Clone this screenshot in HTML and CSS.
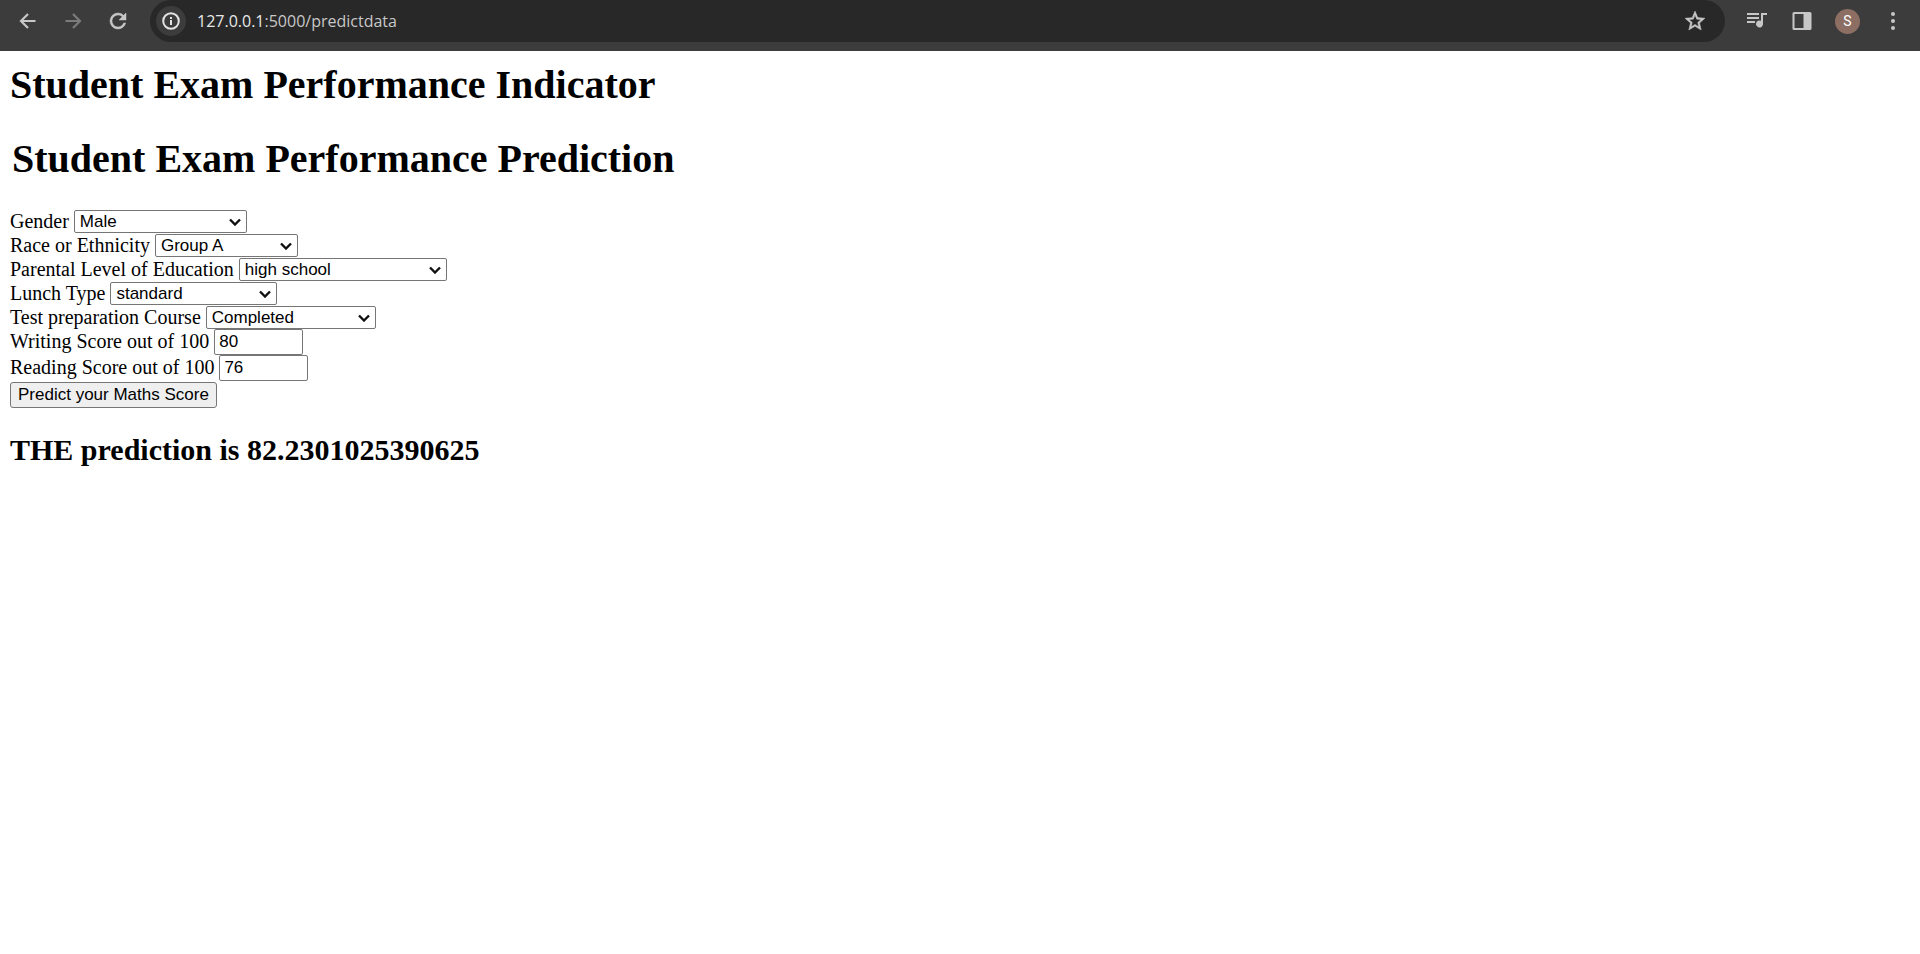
FILE: index.html
```html
<!DOCTYPE html>
<html lang="en">
<head>
<meta charset="utf-8">
<title>Student Exam Performance</title>
<link rel="stylesheet" href="styles.css">
</head>
<body>
<header class="toolbar">
  <nav class="nav-buttons" aria-label="Navigation">
    <button class="icon-button" type="button" aria-label="Back">
      <svg class="icon" viewBox="0 0 24 24"><path d="M19.500 12H5.500M12 5l-7 7 7 7" fill="none" stroke="currentColor" stroke-width="2.200"/></svg>
    </button>
    <button class="icon-button icon-button-dim" type="button" aria-label="Forward">
      <svg class="icon" viewBox="0 0 24 24"><path d="M4.500 12H18.500M12 5l7 7-7 7" fill="none" stroke="currentColor" stroke-width="2.200"/></svg>
    </button>
    <button class="icon-button" type="button" aria-label="Reload">
      <svg class="icon" viewBox="0 0 24 24"><path d="M17.650 6.350A7.960 7.960 0 0 0 12 4a8 8 0 1 0 7.730 10h-2.080A6 6 0 1 1 12 6c1.660 0 3.140.690 4.220 1.780L13 11h7V4z" fill="currentColor" stroke="currentColor" stroke-width=".5"/></svg>
    </button>
  </nav>
  <div class="address-bar">
    <button class="site-info" type="button" aria-label="Site information">
      <svg class="icon-info" viewBox="0 0 20 20"><circle cx="10" cy="10" r="7.800" fill="none" stroke="currentColor" stroke-width="2"/><path d="M9 9h2v5H9zM9 6h2v2H9z" fill="currentColor"/></svg>
    </button>
    <a class="url" href="#"><span class="url-host">127.0.0.1</span>:5000/predictdata</a>
    <button class="icon-button bookmark" type="button" aria-label="Bookmark this page">
      <svg class="icon" viewBox="0 0 24 24"><path d="M22 9.240l-7.190-.620L12 2 9.190 8.630 2 9.240l5.460 4.730L5.820 21 12 17.270 18.180 21l-1.630-7.030zM12 15.400l-3.760 2.270 1-4.280-3.320-2.880 4.380-.380L12 6.100l1.710 4.040 4.380.380-3.320 2.880 1 4.280z" fill="currentColor" stroke="currentColor" stroke-width=".5"/></svg>
    </button>
  </div>
  <div class="actions">
    <button class="icon-button" type="button" aria-label="Media controls">
      <svg class="icon" viewBox="0 0 24 24"><path d="M2 4h12v2H2zM2 8h12v2H2zM2 12h8v2H2zM16 4h6v2h-4v9a3.500 3.500 0 1 1-2-3.160z" fill="currentColor"/></svg>
    </button>
    <button class="icon-button" type="button" aria-label="Side panel">
      <svg class="icon" viewBox="0 0 24 24"><path d="M4 3h16a1.500 1.500 0 0 1 1.500 1.500v15A1.500 1.500 0 0 1 20 21H4a1.500 1.500 0 0 1-1.500-1.500v-15A1.500 1.500 0 0 1 4 3zM4.500 5v14h9V5z" fill="currentColor" fill-rule="evenodd"/></svg>
    </button>
    <button class="avatar" type="button">S</button>
    <button class="icon-button" type="button" aria-label="Menu">
      <svg class="icon" viewBox="0 0 24 24"><circle cx="12" cy="5" r="2" fill="currentColor"/><circle cx="12" cy="12" r="2" fill="currentColor"/><circle cx="12" cy="19" r="2" fill="currentColor"/></svg>
    </button>
  </div>
</header>
<main class="page">
  <h1 class="title">Student Exam Performance Indicator</h1>
  <h1 class="title title-form">Student Exam Performance Prediction</h1>
  <form class="form">
    <div class="row">
      <label for="gender">Gender</label>
      <select class="field select select-gender" id="gender"><option>Male</option><option>Female</option></select>
    </div>
    <div class="row">
      <label for="ethnicity">Race or Ethnicity</label>
      <select class="field select select-ethnicity" id="ethnicity"><option>Group A</option><option>Group B</option><option>Group C</option><option>Group D</option><option>Group E</option></select>
    </div>
    <div class="row">
      <label for="education">Parental Level of Education</label>
      <select class="field select select-education" id="education"><option>high school</option><option>some college</option><option>master's degree</option></select>
    </div>
    <div class="row">
      <label for="lunch">Lunch Type</label>
      <select class="field select select-lunch" id="lunch"><option>standard</option><option>free/reduced</option></select>
    </div>
    <div class="row">
      <label for="course">Test preparation Course</label>
      <select class="field select select-course" id="course"><option>Completed</option><option>None</option></select>
    </div>
    <div class="row row-score">
      <label for="writing">Writing Score out of 100</label>
      <input class="field score" id="writing" type="text" inputmode="numeric" value="80">
    </div>
    <div class="row row-score">
      <label for="reading">Reading Score out of 100</label>
      <input class="field score" id="reading" type="text" inputmode="numeric" value="76">
    </div>
    <button class="submit" type="button">Predict your Maths Score</button>
  </form>
  <h2 class="result">THE prediction is 82.2301025390625</h2>
</main>
</body>
</html>
```

FILE: styles.css
```css
* { box-sizing: border-box; }

body {
  margin: 0;
  background: #fff;
  color: #000;
  font-family: "Liberation Serif", "Times New Roman", serif;
  font-size: 20px;
}

.toolbar {
  display: flex;
  align-items: flex-start;
  height: 51px;
  padding: 0 11px 0 12px;
  background: #3c3c3c;
  color: #c7c7c7;
}

.nav-buttons {
  display: flex;
  gap: 13px;
  margin-right: 16px;
}

.icon-button {
  display: flex;
  align-items: center;
  justify-content: center;
  width: 32px;
  height: 42px;
  padding: 0;
  border: 0;
  background: none;
  color: inherit;
}

.icon-button-dim { color: #7c7c7c; }

.icon {
  width: 24px;
  height: 24px;
}

.address-bar {
  display: flex;
  flex: 1;
  align-items: center;
  height: 42px;
  padding: 0 14px 0 6px;
  border-radius: 21px;
  background: #282828;
}

.site-info {
  display: flex;
  align-items: center;
  justify-content: center;
  width: 30px;
  height: 30px;
  padding: 0;
  border: 0;
  border-radius: 50%;
  background: #3c3c3c;
  color: #e3e3e3;
}

.icon-info {
  width: 20px;
  height: 20px;
}

.url {
  flex: 1;
  margin-left: 11px;
  color: #c7c7c7;
  font-family: "Open Sans", "Noto Sans", sans-serif;
  font-size: 16px;
  line-height: 24px;
  text-decoration: none;
}

.url-host { color: #e8e8e8; }

.actions {
  display: flex;
  align-items: center;
  gap: 13px;
  margin-left: 16px;
}

.avatar {
  width: 25px;
  height: 25px;
  margin: 0 4px;
  padding: 0;
  border: 0;
  border-radius: 50%;
  background: #8d6e63;
  color: #fff;
  font-family: Roboto, sans-serif;
  font-size: 14px;
  line-height: 25px;
}

.page { padding: 11px 10px; }

.title {
  margin: 0 0 28px;
  font-size: 40px;
  line-height: 46px;
}

.title-form {
  margin-bottom: 27px;
  padding-left: 2px;
}

.form {
  display: flex;
  flex-direction: column;
  align-items: flex-start;
}

.row {
  display: flex;
  align-items: flex-end;
  gap: 5px;
  height: 24px;
  line-height: 24px;
}

.row-score {
  align-items: flex-start;
  height: 26px;
}

.field,
.submit {
  margin: 0;
  border: 1px solid #767676;
  border-radius: 2px;
  background: #fff;
  color: #000;
  font-family: "Liberation Sans", Arial, sans-serif;
  font-size: 17px;
}

.select {
  height: 23px;
  padding: 0 20px 0 5px;
  appearance: none;
  background: #fff url("data:image/svg+xml,%3Csvg xmlns='http://www.w3.org/2000/svg' width='12' height='8' viewBox='0 0 12 8'%3E%3Cpath d='M1 1.500l5 5 5-5' fill='none' stroke='%23101010' stroke-width='2.400'/%3E%3C/svg%3E") no-repeat right 5px center;
}

.select-gender { width: 173px; }
.select-ethnicity { width: 143px; }
.select-education { width: 208px; }
.select-lunch { width: 167px; }
.select-course { width: 170px; }

.score {
  width: 89px;
  height: 26px;
  padding: 1px 4px;
}

.submit {
  height: 26px;
  margin-top: 1px;
  padding: 0 7px;
  border-radius: 3px;
  background: #efefef;
}

.result {
  margin: 25px 0 0;
  font-size: 30px;
  line-height: 34px;
}
```
